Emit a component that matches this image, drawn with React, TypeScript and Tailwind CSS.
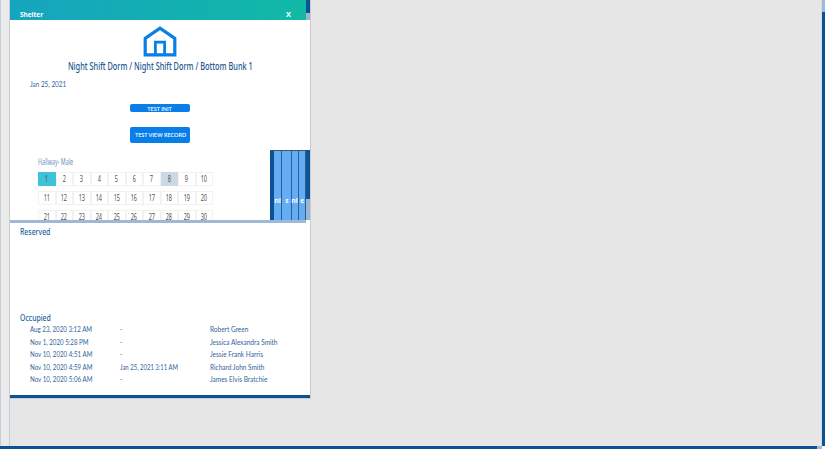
import React from 'react';

const occupied = [
  { from: 'Aug 23, 2020 3:12 AM', to: '-', name: 'Robert Green' },
  { from: 'Nov 1, 2020 5:28 PM', to: '-', name: 'Jessica Alexandra Smith' },
  { from: 'Nov 10, 2020 4:51 AM', to: '-', name: 'Jessie Frank Harris' },
  { from: 'Nov 10, 2020 4:59 AM', to: 'Jan 25, 2021 3:11 AM', name: 'Richard John Smith' },
  { from: 'Nov 10, 2020 5:06 AM', to: '-', name: 'James Elvis Bratchie' },
];

const bunkRows = [0, 10, 20].map((start) => Array.from({ length: 10 }, (_, i) => start + i + 1));

const tabs = [
  { label: 'ni', size: 'w-[8px]' },
  { label: 's', size: 'w-[10px]' },
  { label: 'nl', size: 'w-[7px]' },
  { label: 'e', size: 'w-[7px]' },
];

function cellColor(n: number) {
  if (n === 1) return 'bg-[#3cc3d8] border-[#3cc3d8]';
  if (n === 8) return 'bg-[#cbd9e7] border-[#cbd9e7]';
  return 'bg-white border-[#f2f2f2]';
}

function HouseIcon() {
  return (
    <svg className="h-[31px] w-[34px]" viewBox="0 0 34 31" fill="none" stroke="#087fe8" strokeWidth="3.2">
      <path d="M2.2 28.9V12.4L17 2.2l14.8 10.2v16.5z" />
      <path d="M12.4 28V16.2h9.2V28" strokeWidth="2.8" />
    </svg>
  );
}

function BunkArea() {
  return (
    <div className="flex h-[70px] justify-between overflow-hidden">
      <div className="ml-7 pt-[6px]">
        <div className="h-4 origin-left scale-x-[0.67] whitespace-nowrap font-['Noto_Sans'] text-[8px] leading-[11px] text-[#6594be]">
          Hallway- Male
        </div>
        <div className="flex flex-col gap-[5px]">
          {bunkRows.map((row) => (
            <div key={row[0]} className="grid h-[14px] w-[175px] grid-cols-10">
              {row.map((n) => (
                <div key={n} className={`flex items-center justify-center border ${cellColor(n)}`}>
                  <span className="scale-x-[0.65] font-['Noto_Sans'] text-[8.5px] leading-[12px] text-[#505050]">{n}</span>
                </div>
              ))}
            </div>
          ))}
        </div>
      </div>
      <div className="flex">
        <div className="flex w-9 border-t border-[#37566f] bg-[#64adf5]">
          <div className="w-1 shrink-0 bg-[#0b5394]" />
          {tabs.map((tab) => (
            <div key={tab.label} className={`${tab.size} flex shrink-0 items-start justify-center border-r border-[#2b5e8c] pt-[44px] font-['Open_Sans'] text-[7.5px] font-bold leading-[11px] text-white`}>
              <span className="scale-x-[0.9]">{tab.label}</span>
            </div>
          ))}
        </div>
        <div className="w-[4px] bg-[#9bb6d1]">
          <div className="h-[49px] bg-[#0b5394]" />
        </div>
      </div>
    </div>
  );
}

function ShelterPanel() {
  return (
    <section className="flex h-[398px] w-[300px] flex-col bg-white shadow-[0_0_0_1px_#c9ccd0]">
      <header className="flex h-5 shrink-0">
        <div className="flex w-[296px] justify-between bg-gradient-to-r from-[#17a4bf] to-[#12b9a6] pl-[10px] pr-[15px] pt-2 font-['Open_Sans'] text-[7.5px] font-bold leading-[12px] text-white">
          <span className="origin-left scale-x-[0.86]">Shelter</span>
          <span>X</span>
        </div>
        <div className="w-[4px] bg-[#9bb6d1]">
          <div className="h-[13px] bg-[#0b5394]" />
        </div>
      </header>
      <div className="flex h-[130px] shrink-0 flex-col items-center pt-[6px]">
        <HouseIcon />
        <h1 className="mt-[1px] h-4 scale-x-[0.668] whitespace-nowrap font-['Noto_Sans'] text-[11px] font-medium leading-4 text-[#24598f]">
          Night Shift Dorm / Night Shift Dorm / Bottom Bunk 1
        </h1>
        <div className="mt-[5px] h-3 w-full origin-[20px] scale-x-[0.85] pl-5 font-['Lato'] text-[7.5px] leading-3 text-[#2f649b]">
          Jan 25, 2021
        </div>
        <button className="mt-[13px] flex h-2 w-[60px] items-start justify-center rounded-[2px] bg-[#087fe8] font-['Lato'] text-[6.5px] font-semibold leading-[9px] text-white">
          <span className="scale-x-[0.84] whitespace-nowrap">TEST INIT</span>
        </button>
        <button className="mt-[15px] flex h-4 w-[60px] justify-center whitespace-nowrap rounded-[2px] bg-[#087fe8] font-['Lato'] text-[6.5px] font-semibold leading-4 text-white">
          <span className="shrink-0 scale-x-[0.84]">TEST VIEW RECORD</span>
        </button>
      </div>
      <BunkArea />
      <div className="h-[3px] w-[296px] shrink-0 bg-[#9db9d6]" />
      <h2 className="h-[89px] w-[100px] shrink-0 origin-[10px] scale-x-[0.86] pl-[10px] pt-[2px] font-['Noto_Sans'] text-[8px] font-medium leading-[13px] text-[#24659f]">Reserved</h2>
      <div className="h-[83px] shrink-0">
        <h2 className="h-[12px] w-[100px] origin-[10px] scale-x-[0.86] pl-[10px] font-['Noto_Sans'] text-[8px] font-medium leading-[11px] text-[#24659f]">Occupied</h2>
        {occupied.map((row) => (
          <div key={row.from} className="grid h-[12.5px] grid-cols-[90px_90px_1fr] whitespace-nowrap pl-5 font-['Lato'] text-[7.5px] leading-[12.5px] text-[#2f649b]">
            <span className="origin-left scale-x-[0.825]">{row.from}</span>
            <span className="origin-left scale-x-[0.795]">{row.to}</span>
            <span className="origin-left scale-x-[0.865]">{row.name}</span>
          </div>
        ))}
      </div>
      <div className="h-[3px] shrink-0 bg-[#0b5394]" />
    </section>
  );
}

export default function App() {
  return (
    <main className="flex h-[449px] w-[825px] flex-col overflow-hidden bg-[#e6e6e6]">
      <div className="flex h-[446px]">
        <div className="w-[10px] shrink-0 border-x border-[#c5cddb] bg-[#ecebec]" />
        <div className="-ml-px w-[811px] border-l border-[#c5cddb]">
          <ShelterPanel />
        </div>
        <div className="ml-auto w-1 border-l border-[#d5dde5] bg-[#0b5394]">
          <div className="h-3 bg-[#9bbbdc]" />
        </div>
      </div>
      <div className="flex h-[3px] bg-white">
        <div className="w-[817px] bg-[#0b5394]" />
        <div className="w-[5px] bg-[#9bbbdc]" />
      </div>
    </main>
  );
}
